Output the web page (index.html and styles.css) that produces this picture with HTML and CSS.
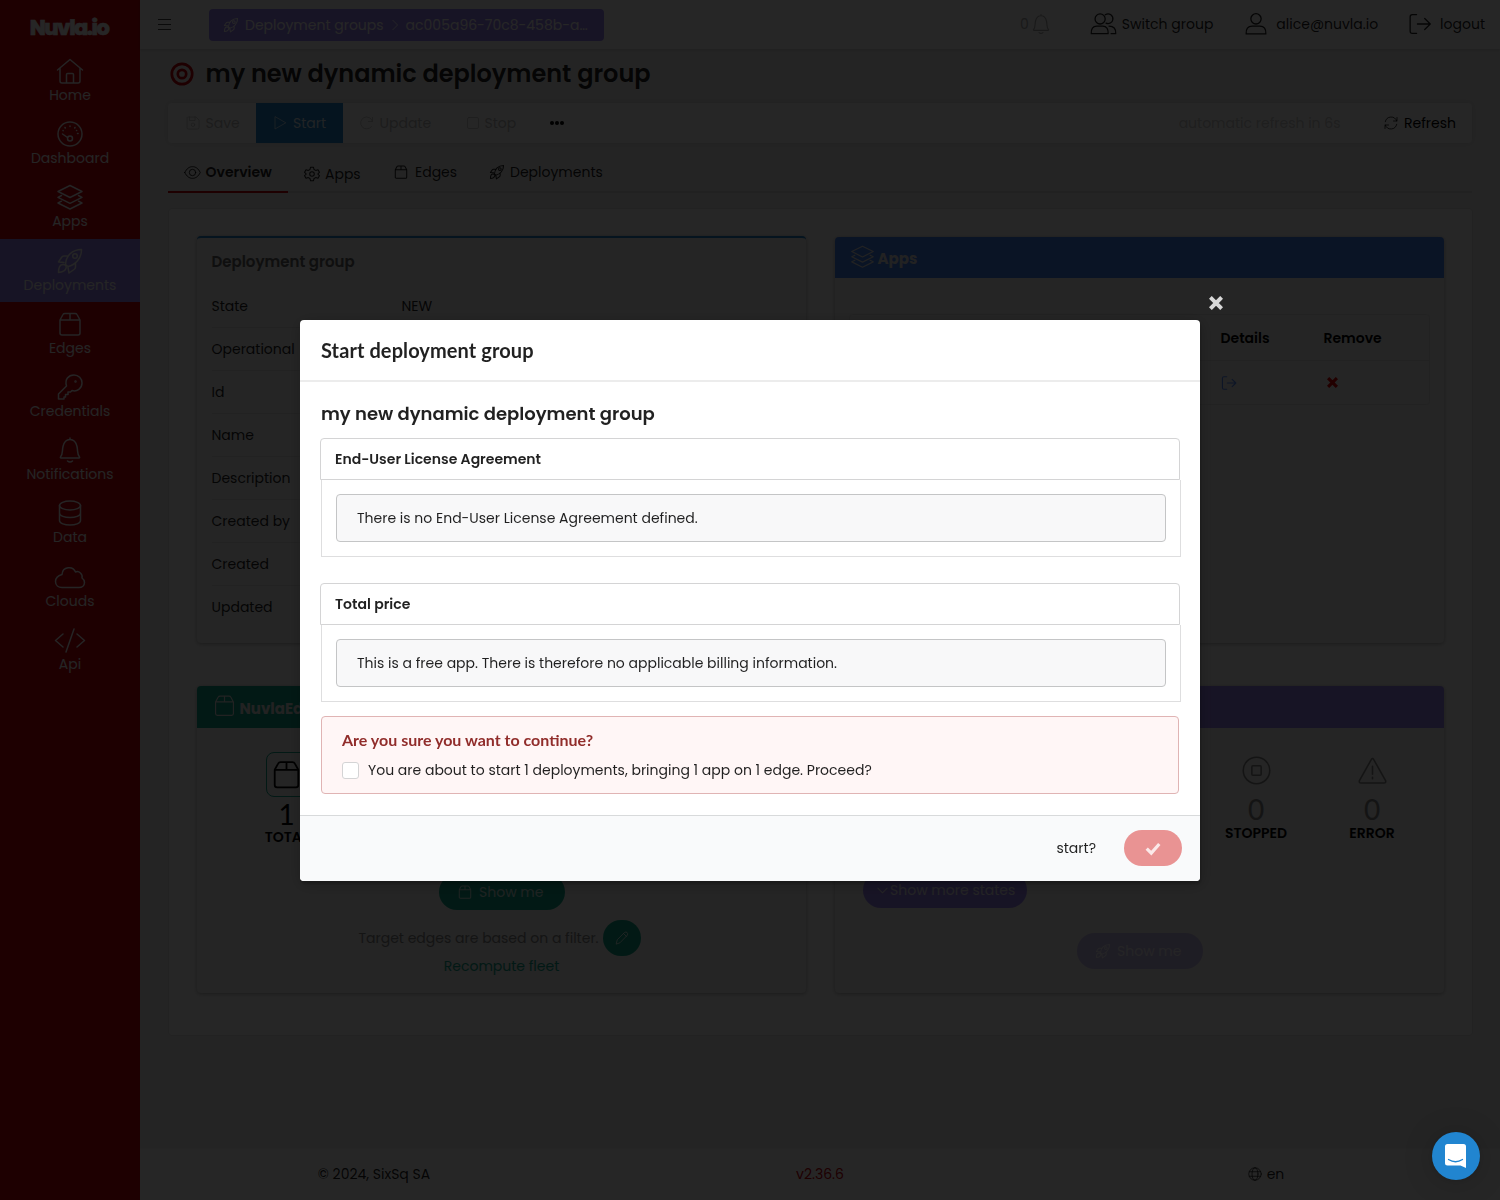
FILE: index.html
```html
<!DOCTYPE html>
<html lang="en">
<head>
<meta charset="utf-8">
<title>Nuvla.io</title>
<link rel="stylesheet" href="styles.css">
</head>
<body>
<svg class="sprite" aria-hidden="true">
  <symbol id="home" viewBox="0 0 28 28"><path d="M1.5 13 14 2.5 26.500 13M4 11v13q0 2 2 2h16q2 0 2-2V11M10.500 26V17.500q0-1 1-1h5q1 0 1 1V26"/></symbol>
  <symbol id="gauge" viewBox="0 0 28 28"><circle cx="14" cy="14" r="12"/><circle cx="14" cy="18.500" r="2.500"/><path d="m11.500 17.500-5-3.500M14 6v.6M9 7.500l.3.5M19 7.500l-.3.5M21.500 13.500h.6M7 10.500l.2.1M20.500 10.500h.2"/></symbol>
  <symbol id="layers" viewBox="0 0 28 28"><path d="M14 2.500 26 8.500 14 14.500 2 8.500ZM5.500 12.500 2 14.300l12 6 12-6-3.500-1.800M5.500 18.200 2 20l12 6 12-6-3.500-1.800"/></symbol>
  <symbol id="rocket" viewBox="0 0 28 28"><path d="M9.500 17.500C10 9 16 2.500 25.500 2.500c0 9.500-6.500 15.500-13.500 17ZM11.500 9H8Q6.500 9 5.500 10.500L2.500 15l5.500.5M19.500 16v4q0 1.500-1.500 2.500l-5 3.500-1-5.500M2.500 25.500c0-4 .5-8 4.500-8 5 0 4.500 7.500-4.500 8Z"/><circle cx="19" cy="9" r="2.300"/></symbol>
  <symbol id="box" viewBox="0 0 28 28"><path d="M4 10 7 4.500Q7.500 3.500 9 3.500h10q1.500 0 2 1L24 10v13q0 2-2 2H6q-2 0-2-2ZM4 10h20M14 3.500V10"/></symbol>
  <symbol id="key" viewBox="0 0 28 28"><path d="M10.500 13C8.500 6.500 12.500 2 18 2c4.500 0 8 3.500 8 8 0 5.500-5 9-10 7.500L14.500 19H12v2.500H9.500V24H8v2H2.500v-5Z"/><circle cx="19.500" cy="8.500" r=".5"/></symbol>
  <symbol id="bell" viewBox="0 0 28 28"><path d="M14 2v1.500M4.500 21C7 18.500 6 15 7 10.500 8 6 10.500 3.500 14 3.500s6 2.500 7 7c1 4.500 0 8 2.500 10.500Q24 22 23 22H5q-1 0-.5-1ZM11.500 25q2.500 2 5 0"/></symbol>
  <symbol id="data" viewBox="0 0 28 28"><ellipse cx="14" cy="6.500" rx="10.500" ry="4.500"/><path d="M3.500 6.500v15C3.500 27.500 24.500 27.500 24.500 21.500v-15M3.500 14c0 6 21 6 21 0"/></symbol>
  <symbol id="cloud" viewBox="0 0 32 28"><path d="M8 24.500h17c3 0 5.500-2 5.500-5 0-2-1-3.500-2.500-4.500 1-4-3-7.500-6.500-6C19 2.500 8.500 3.500 8 11.500c-3.500 1-6.500 3.500-6.500 7 0 4 3 6 6.500 6Z"/></symbol>
  <symbol id="code" viewBox="0 0 32 28"><path d="m9 8-7.500 6.500L9 21M23 8l7.500 6.500L23 21M20 3l-8 23"/></symbol>
  <symbol id="save" viewBox="0 0 28 28"><path d="M4 2h16l6 6v15q0 3-3 3H5q-3 0-3-3V4ZM7 2v7h11V2"/><circle cx="14" cy="17.500" r="3.500"/></symbol>
  <symbol id="play" viewBox="0 0 28 28"><path d="M4 2v24l21-12Z"/></symbol>
  <symbol id="redo" viewBox="0 0 28 28"><path d="M25 3v8h-8M25 11A12 12 0 1 0 23 21"/></symbol>
  <symbol id="square" viewBox="0 0 28 28"><rect x="3" y="3" width="22" height="22" rx="3"/></symbol>
  <symbol id="eye" viewBox="0 0 32 28"><path d="M1.500 14C5 6.500 10 3 16 3s11 3.500 14.500 11C27 21.500 22 25 16 25S5 21.500 1.500 14Z"/><circle cx="16" cy="14" r="6"/></symbol>
  <symbol id="gear" viewBox="0 0 28 28"><path d="M11.500 2h5l1 4 3 1.700L24.500 6.500l2.500 4.500-3 3 3 3-2.500 4.500-4-1.200-3 1.700-1 4h-5l-1-4-3-1.700-4 1.200L1 17l3-3-3-3 2.500-4.500 4 1.200 3-1.700Z"/><circle cx="14" cy="14" r="4"/></symbol>
  <symbol id="refresh" viewBox="0 0 28 28"><path d="M26 3v7h-7M2 25v-7h7M25.500 10A12 12 0 0 0 2.500 11.500M2.500 18A12 12 0 0 0 25.500 16.500"/></symbol>
  <symbol id="user" viewBox="0 0 28 28"><circle cx="14" cy="8" r="6"/><path d="M2.500 25.500q-.5-9 7-9h9q7.500 0 7 9Z"/></symbol>
  <symbol id="users" viewBox="0 0 32 28"><circle cx="12" cy="8" r="6"/><path d="M1.500 25.500q-.5-9 6.500-9h7q7 0 6.500 9ZM18 3c5-3 10 1 9 6-.7 3.500-4.500 5.500-8 4M22.500 16.500q8.500 0 8 9H25"/></symbol>
  <symbol id="logout" viewBox="0 0 28 28"><path d="M10 3H5Q2.500 3 2.500 5.500v17Q2.500 25 5 25h5M11 14h15M19.500 7.500 26 14l-6.500 6.500"/></symbol>
  <symbol id="chevron" viewBox="0 0 28 28"><path d="m9 3 11 11L9 25"/></symbol>
  <symbol id="down" viewBox="0 0 28 28"><path d="m4 9 10 10L24 9"/></symbol>
  <symbol id="pencil" viewBox="0 0 28 28"><path d="m2.500 25.500 2-8L19 3q3-2 5 0t1 5L10.500 23ZM17 5l6 6"/></symbol>
  <symbol id="stopped" viewBox="0 0 28 28"><circle cx="14" cy="14" r="12.800"/><rect x="9.500" y="9.500" width="9" height="9" rx="1"/></symbol>
  <symbol id="warn" viewBox="0 0 28 28"><path d="M12.800 3.500Q14 1.500 15.200 3.500L26.500 23.500q1 2.500-1.500 2.500H3Q.5 26 1.500 23.500ZM14 10v7.500M14 20.500V22"/></symbol>
  <symbol id="globe" viewBox="0 0 28 28"><circle cx="14" cy="14" r="12.500"/><ellipse cx="14" cy="14" rx="6" ry="12.500"/><path d="M3 9.500h22M3 18.500h22"/></symbol>
  <symbol id="cross" viewBox="0 0 14 14"><path d="m2.800 2.800 8.400 8.400M11.200 2.800l-8.400 8.400" stroke-width="4" stroke-linecap="square"/></symbol>
  <symbol id="check" viewBox="0 0 14 14"><path d="m1.500 7.500 4 4 7-8" stroke-width="2.800" stroke-linecap="butt" stroke-linejoin="miter"/></symbol>
</svg>

<div class="app">
  <nav class="sidebar">
    <div class="logo">Nuvla.io</div>
    <a class="nav"><svg><use href="#home"/></svg><span>Home</span></a>
    <a class="nav"><svg><use href="#gauge"/></svg><span>Dashboard</span></a>
    <a class="nav"><svg><use href="#layers"/></svg><span>Apps</span></a>
    <a class="nav active"><svg><use href="#rocket"/></svg><span>Deployments</span></a>
    <a class="nav"><svg><use href="#box"/></svg><span>Edges</span></a>
    <a class="nav"><svg><use href="#key"/></svg><span>Credentials</span></a>
    <a class="nav"><svg><use href="#bell"/></svg><span>Notifications</span></a>
    <a class="nav"><svg><use href="#data"/></svg><span>Data</span></a>
    <a class="nav"><svg class="wide"><use href="#cloud"/></svg><span>Clouds</span></a>
    <a class="nav"><svg class="wide"><use href="#code"/></svg><span>Api</span></a>
  </nav>

  <div class="page">
    <header class="topbar">
      <div class="burger"><i></i><i></i><i></i></div>
      <div class="crumbs"><svg><use href="#rocket"/></svg><span class="crumb-group">Deployment groups</span><svg class="sep"><use href="#chevron"/></svg><span class="crumb-id">ac005a96-70c8-458b-a…</span></div>
      <div class="account">
        <span class="bell">0<svg><use href="#bell"/></svg></span>
        <span class="switch"><svg class="wide"><use href="#users"/></svg><b>Switch group</b></span>
        <span class="mail"><svg><use href="#user"/></svg><b>alice@nuvla.io</b></span>
        <span class="out"><svg><use href="#logout"/></svg><b>logout</b></span>
      </div>
    </header>

    <main class="main">
      <h2 class="title"><svg viewBox="0 0 24 24"><circle cx="12" cy="12" r="10.200"/><circle cx="12" cy="12" r="4.200"/></svg><span>my new dynamic deployment group</span></h2>

      <div class="menu">
        <span class="item save"><svg><use href="#save"/></svg>Save</span>
        <span class="item start"><svg><use href="#play"/></svg>Start</span>
        <span class="item update"><svg><use href="#redo"/></svg>Update</span>
        <span class="item stop"><svg><use href="#square"/></svg>Stop</span>
        <span class="dots"><i></i><i></i><i></i></span>
        <span class="auto">automatic refresh in 6s</span>
        <span class="reload"><svg><use href="#refresh"/></svg><b>Refresh</b></span>
      </div>

      <div class="tabs">
        <span class="tab on"><svg class="wide"><use href="#eye"/></svg><b>Overview</b></span>
        <span class="tab apps"><svg><use href="#gear"/></svg><b>Apps</b></span>
        <span class="tab edges"><svg><use href="#box"/></svg><b>Edges</b></span>
        <span class="tab deps"><svg><use href="#rocket"/></svg><b>Deployments</b></span>
      </div>

      <section class="segment">
        <div class="card info">
          <h4>Deployment group</h4>
          <div class="row"><span>State</span><span>NEW</span></div>
          <div class="row"><span>Operational</span></div>
          <div class="row"><span>Id</span></div>
          <div class="row"><span>Name</span></div>
          <div class="row"><span>Description</span></div>
          <div class="row"><span>Created by</span></div>
          <div class="row"><span>Created</span></div>
          <div class="row"><span>Updated</span></div>
        </div>

        <div class="card apps-card">
          <div class="card-head blue"><svg><use href="#layers"/></svg><span>Apps</span></div>
          <div class="table">
            <div class="tr th"><span></span><span>Details</span><span>Remove</span></div>
            <div class="tr"><span></span><span><svg class="go"><use href="#logout"/></svg></span><span><svg class="del"><use href="#cross"/></svg></span></div>
          </div>
        </div>

        <div class="card">
          <div class="card-head teal"><svg><use href="#box"/></svg><span>NuvlaEdges</span></div>
          <div class="stats four">
            <div class="stat total"><div class="frame"><svg><use href="#box"/></svg></div><strong>1</strong><em>TOTAL</em></div>
          </div>
          <div class="actions">
            <span class="pill green"><svg><use href="#box"/></svg>Show me</span>
            <div class="filter"><span>Target edges are based on a filter.</span><span class="edit"><svg><use href="#pencil"/></svg></span></div>
            <a class="recompute">Recompute fleet</a>
          </div>
        </div>

        <div class="card">
          <div class="card-head purple"><svg><use href="#rocket"/></svg><span>Deployments</span></div>
          <div class="stats five">
            <div class="stat stopped"><svg><use href="#stopped"/></svg><strong>0</strong><em>STOPPED</em></div>
            <div class="stat"><svg><use href="#warn"/></svg><strong>0</strong><em>ERROR</em></div>
          </div>
          <span class="pill more"><svg><use href="#down"/></svg>Show more states</span>
          <span class="pill faded"><svg><use href="#rocket"/></svg>Show me</span>
        </div>
      </section>
    </main>

    <footer class="footer">
      <span class="copy">© 2024, SixSq SA</span>
      <span class="version">v2.36.6</span>
      <span class="lang"><svg><use href="#globe"/></svg>en</span>
    </footer>
  </div>
</div>

<div class="dimmer">
  <div class="modal">
    <svg class="close"><use href="#cross"/></svg>
    <div class="modal-head">Start deployment group</div>
    <div class="modal-body">
      <h3>my new dynamic deployment group</h3>
      <div class="acc-title">End-User License Agreement</div>
      <div class="acc-body"><div class="note">There is no End-User License Agreement defined.</div></div>
      <div class="acc-title second">Total price</div>
      <div class="acc-body"><div class="note">This is a free app. There is therefore no applicable billing information.</div></div>
      <div class="confirm">
        <div class="confirm-title">Are you sure you want to continue?</div>
        <label class="check"><i></i><span>You are about to start 1 deployments, bringing 1 app on 1 edge. Proceed?</span></label>
      </div>
    </div>
    <div class="modal-foot"><span>start?</span><button class="ok"><svg><use href="#check"/></svg></button></div>
  </div>
</div>

<div class="chat"><svg viewBox="0 0 24 26"><path class="bubble" d="M4 1h15.500a2.500 2.500 0 0 1 2.500 2.500V25l-5.500-2.500H3.500A2.500 2.500 0 0 1 1 20V3.500A2.500 2.500 0 0 1 3.500 1Z"/><path class="smile" d="M4.500 16.500q7 4.500 14 0"/></svg></div>
</body>
</html>
```

FILE: styles.css
```css
* { box-sizing: border-box; }
html, body { margin: 0; height: 1200px; overflow: hidden; }
body { font: 14px/20px Poppins, Inter, sans-serif; color: rgba(0,0,0,.87); background: #f1f1f1; }
b { font-weight: inherit; }
em { font-style: normal; }
svg { fill: none; stroke: currentColor; stroke-width: 1.5; stroke-linecap: round; stroke-linejoin: round; width: 14px; height: 14px; flex: none; }
.sprite { position: absolute; width: 0; height: 0; }

.app { display: flex; height: 1200px; }

.sidebar { width: 140px; background: #c8000a; color: #f4f4f4; flex: none; }
.logo { height: 49px; padding: 9px 2px 0 0; text-align: center; font: 800 21px/38px Poppins, Inter, sans-serif; letter-spacing: -1.55px; color: #fff; -webkit-text-stroke: .5px; }
.nav { display: flex; flex-direction: column; align-items: center; height: 63.2px; padding-top: 8px; }
.nav svg { width: 28px; height: 28px; }
.nav svg.wide { width: 32px; }
.nav.active { background: #9c86f8; }

.page { flex: 1; display: flex; flex-direction: column; min-width: 0; }
.topbar { display: flex; align-items: center; height: 49px; background: #fff; box-shadow: 0 1px 3px rgba(0,0,0,.15); padding: 0 15px 0 18px; flex: none; }
.burger { display: flex; flex-direction: column; gap: 4px; width: 13px; margin-right: 38px; }
.burger i { height: 1px; background: #444; }
.crumbs { display: flex; align-items: center; width: 395px; height: 32px; padding: 0 15px; border-radius: 4px; background: #9c86f8; color: #fff; white-space: nowrap; }
.crumbs svg:first-child, .tab svg, .pill svg { width: 16px; height: 16px; margin: 0 -1px; stroke-width: 1.8; }
.crumbs .sep { width: 12px; height: 12px; margin: 0 5px; stroke-width: 2; }
.crumb-group { margin-left: 7px; }
.account { margin-left: auto; display: flex; align-items: center; padding-bottom: 1px; }
.account > span { display: flex; align-items: center; }
.account b { padding-bottom: 1px; }
.account svg { width: 24px; height: 24px; }
.account .wide { width: 27px; }
.account .bell { color: #aaa; margin-right: 38px; }
.account .bell svg { width: 22px; height: 22px; margin-left: 1px; }
.switch { gap: 5px; margin-right: 31px; }
.mail { gap: 8px; margin-right: 30px; }
.out { gap: 8px; }

.main { flex: 1; padding: 10px 28px 0; }
.title { display: flex; align-items: center; margin: 0 0 14px; height: 30px; font-size: 24px; line-height: 30px; font-weight: 600; gap: 11.5px; padding-left: 2px; }
.title svg { width: 24px; height: 24px; stroke: #c8000a; stroke-width: 2.7; }

.menu { display: flex; align-items: center; height: 40px; background: #fff; border-radius: 4px; box-shadow: 0 0 7px rgba(0,0,0,.13); }
.item { display: flex; align-items: center; gap: 6px; height: 40px; color: #bbb; }
.save { width: 87.5px; padding-left: 17.5px; }
.start { width: 87px; padding-left: 17.5px; color: #dcebf7; background: #2185d0; }
.update { width: 105px; padding-left: 17px; }
.stop { width: 102.5px; padding-left: 18px; gap: 5px; }
.dots { display: flex; gap: 1px; }
.dots i { width: 4px; height: 4px; border-radius: 50%; background: #000; }
.auto { margin-left: auto; color: #ccc; margin-right: 43.5px; }
.reload { display: flex; align-items: center; gap: 6px; color: #000; padding-right: 16px; }

.tabs { display: flex; height: 50px; border-bottom: 2px solid #ddd; }
.tab { display: flex; align-items: center; height: 50px; gap: 7px; padding: 8px 0 1px; }
.on { width: 120px; padding: 10px 0 0 16px; font-weight: 600; border-bottom: 2px solid #c8000a; gap: 6px; }
.tab.on { padding: 10px 0 0 16.5px; }
.tab.on svg { width: 17px; height: 15px; }
.tab.apps { padding: 12px 0 0 17px; width: 106px; gap: 6px; }
.tab.edges { width: 95px; }
.tab.deps { padding-left: 1px; gap: 6px; }

.segment { display: grid; grid-template-columns: 609px 609px; column-gap: 29px; grid-template-rows: 407px 307px; row-gap: 43px; height: 828px; margin: 15px -1px 0 0; padding: 27px 28px 0 28px; border: 1px solid #e2e2e2; border-radius: 4px; background: #fff; }
.card { background: #f4f4f4; border-radius: 4px; box-shadow: 0 1px 4px rgba(0,0,0,.3); overflow: hidden; }
.info { border-top: 2px solid #2185d0; padding: 0 14.500px; }
.info h4 { margin: 13px 0 12px; font-size: 15px; line-height: 22px; font-weight: 600; color: #666; }
.row { display: grid; grid-template-columns: 190px 1fr; align-items: center; height: 43px; border-bottom: 1px solid #e4e4e4; }
.row:last-child { border-color: transparent; }
.card-head { display: flex; height: 42px; align-items: center; padding: 3px 14.500px 0; font-size: 15px; font-weight: 700; color: #e4e4e4; gap: 3px; }
.card-head svg { width: 25px; height: 25px; margin-bottom: 6px; stroke-width: 1.3; }
.apps-card { margin-top: 1px; }
.blue { background: #4484f5; height: 41px; }
.teal { background: #10a88c; }
.purple { background: #9c86f8; }
.table { margin: 36px 14px 0; background: #f8f8f8; border: 1px solid #e5e5e5; border-radius: 4px; }
.tr { display: grid; grid-template-columns: 370.5px 103px 1fr; align-items: center; height: 43px; }
.th { height: 46px; font-weight: 600; border-bottom: 1px solid #e5e5e5; color: #000; }
.tr svg { display: block; }
.tr .go { color: #5b8fff; width: 16px; height: 16px; stroke-width: 2; }
.tr .del { color: #e00000; width: 11px; height: 11px; margin-left: 3px; }

.stats { display: grid; padding: 24px 14px 0; }
.four { grid-template-columns: repeat(4, 145px); height: 146px; margin-left: 3px; }
.five { grid-template-columns: repeat(5, 116px); height: 144px; margin-left: 1px; }
.stat { display: flex; flex-direction: column; align-items: center; color: #000; }
.stat strong { font: 400 28px/24px Lato, sans-serif; margin: 2px 0 4px; }
.stat em { font-weight: 600; line-height: 14px; }
.frame { display: grid; place-items: center; width: 42px; height: 45px; border: 1.500px solid #10a88c; border-radius: 8px; margin-bottom: 3px; flex: none; }
.frame svg { width: 33px; height: 33px; }
.five .stat { padding-top: 4px; }
.five .stat svg, .five .stat strong { color: #888; }
.five .stat svg { width: 29px; height: 29px; margin-bottom: 10px; }
.five .stat em { margin-top: 1px; }
.stopped { grid-column: 4; }
.pill { display: flex; align-items: center; height: 36px; border-radius: 18px; width: 126px; padding-left: 19.500px; gap: 7px; }
.green { background: #10a88c; color: #cde9e2; }
.actions { display: flex; flex-direction: column; align-items: center; }
.filter { display: flex; align-items: center; gap: 4px; margin: 10px 4px 0 0; color: #888; }
.edit { display: grid; place-items: center; width: 38px; height: 36px; border-radius: 18px; background: #10a88c; color: #fff; }
.recompute { color: #10a88c; }
.more { width: 164px; margin-left: 28px; padding-left: 13px; gap: 1px; background: #9c86f8; color: #f0eefa; }
.pill.more svg { width: 13px; height: 13px; margin: 0; stroke-width: 2.2; }
.faded { margin: 25px auto 0; background: #cac0ee; color: #f6f4fd; }

.footer { display: grid; grid-template-columns: repeat(3, 446px); align-items: center; height: 52px; padding: 0 0 2px 11px; background: #fff; border-top: 1px solid #f8f8f8; flex: none; text-align: center; }
.version { color: #c8000a; }
.lang { display: flex; align-items: center; justify-content: center; gap: 5px; }

.dimmer { position: fixed; inset: 0; display: flex; align-items: center; justify-content: center; background: rgba(0,0,0,.85); }
.modal { position: relative; width: 900px; height: 561px; margin-top: 1px; border-radius: 4px; background: #fff; box-shadow: 1px 3px 3px rgba(0,0,0,.2), 1px 3px 15px 2px rgba(0,0,0,.2); display: flex; flex-direction: column; color: rgba(0,0,0,.87); }
.close { position: absolute; right: -23px; top: -24px; width: 14px; height: 14px; color: #d8d8d8; }
.modal-head { height: 62px; padding: 0 21px; font: 700 20px/60px Lato, sans-serif; letter-spacing: .09px; border-bottom: 2px solid #ececec; }
.modal-body { flex: 1; padding: 20px 20px 0; }
.modal-body h3 { margin: 0 0 12px 1px; font-size: 18px; line-height: 24px; font-weight: 600; }
.acc-title { height: 42px; padding: 0 14px; line-height: 40px; font-weight: 600; border: 1px solid #d4d4d5; border-radius: 4px 4px 0 0; }
.acc-body { height: 77px; margin: 0 -1px 0 1px; padding: 14px; border: 1px solid #dededf; border-top: 0; }
.second { margin-top: 26px; }
.note { height: 48px; padding: 0 20px; line-height: 46px; border: 1px solid #c4c5c6; border-radius: 4px; background: #f8f8f9; }
.confirm { height: 78px; margin: 14px 1px 0; padding: 13px 20px; border: 1px solid #e0b4b4; border-radius: 4px; background: #fff6f6; }
.confirm-title { font: 700 16px/20px Lato, sans-serif; color: #912d2b; }
.check { display: flex; align-items: center; margin-top: 10px; gap: 9px; }
.check span { padding-bottom: 1px; }
.check i { width: 17px; height: 17px; border: 1px solid #d4d4d5; border-radius: 3px; background: #fff; }
.modal-foot { display: flex; align-items: center; justify-content: flex-end; gap: 28px; height: 66px; padding: 0 18px 2px 0; background: #f9fafb; border-top: 1px solid #d8dadb; border-radius: 0 0 4px 4px; }
.ok { display: grid; place-items: center; width: 58px; height: 36px; border: 0; padding: 0; border-radius: 18px; background: #e99393; color: #fbe9e9; }
.ok svg { width: 16px; height: 16px; }

.chat { position: fixed; right: 20px; bottom: 20px; display: grid; place-items: center; width: 48px; height: 48px; border-radius: 50%; background: #2185d0; box-shadow: 0 1px 6px rgba(0,0,0,.1), 0 2px 32px rgba(0,0,0,.16); }
.chat svg { width: 24px; height: 26px; }
.bubble { fill: #fff; stroke: none; }
.smile { stroke: #2185d0; stroke-width: 1.3; }
```
